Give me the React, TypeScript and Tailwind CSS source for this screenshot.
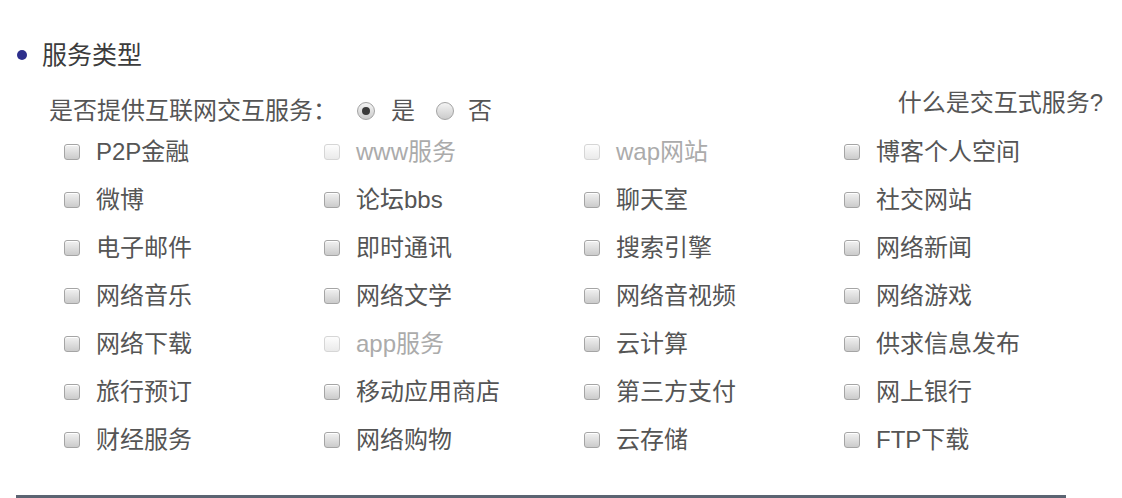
const font = { fontFamily: '"Liberation Sans", "Noto Sans CJK SC", sans-serif' };

type Item = { label: string; disabled?: boolean };

const items: Item[] = [
  { label: "P2P金融" },
  { label: "www服务", disabled: true },
  { label: "wap网站", disabled: true },
  { label: "博客个人空间" },
  { label: "微博" },
  { label: "论坛bbs" },
  { label: "聊天室" },
  { label: "社交网站" },
  { label: "电子邮件" },
  { label: "即时通讯" },
  { label: "搜索引擎" },
  { label: "网络新闻" },
  { label: "网络音乐" },
  { label: "网络文学" },
  { label: "网络音视频" },
  { label: "网络游戏" },
  { label: "网络下载" },
  { label: "app服务", disabled: true },
  { label: "云计算" },
  { label: "供求信息发布" },
  { label: "旅行预订" },
  { label: "移动应用商店" },
  { label: "第三方支付" },
  { label: "网上银行" },
  { label: "财经服务" },
  { label: "网络购物" },
  { label: "云存储" },
  { label: "FTP下载" },
];

function Checkbox({ disabled }: { disabled?: boolean }) {
  if (disabled) {
    return (
      <span className="block w-[16px] h-[16px] shrink-0 rounded-[3px] border border-[#d6d6d6] bg-gradient-to-b from-[#fdfdfd] to-[#eaeaea]" />
    );
  }
  return (
    <span className="block w-[16px] h-[16px] shrink-0 rounded-[3px] border border-[#a5a5a5] bg-gradient-to-b from-[#f2f2f2] to-[#cbcbcb] shadow-[inset_0_1px_0_#fff]" />
  );
}

function Radio({ checked }: { checked?: boolean }) {
  return (
    <span className="flex items-center justify-center w-[18px] h-[18px] shrink-0 rounded-full border border-[#a3a3a3] bg-gradient-to-b from-[#f4f4f4] to-[#cbcbcb]">
      {checked && <span className="block w-[8px] h-[8px] rounded-full bg-[#3a3a3a]" />}
    </span>
  );
}

export default function App() {
  return (
    <div className="w-[1122px] h-[498px] bg-white overflow-hidden" style={font}>
      {/* section title */}
      <div className="flex items-center pt-[37px] pl-[17px] h-[73px]">
        <span className="block w-[10px] h-[10px] rounded-full bg-[#2d2f8c]" />
        <span className="ml-[15px] text-[25px] leading-[36px] text-[#3c3c3c]">服务类型</span>
      </div>

      {/* question */}
      <div className="flex h-[32px] mt-[22px] pl-[49px] pr-[19px] text-[24px] leading-[32px] text-[#555]">
        <span>是否提供互联网交互服务：</span>
        <label className="flex items-center ml-[20px]">
          <Radio checked />
          <span className="ml-[16px]">是</span>
        </label>
        <label className="flex items-center ml-[21px]">
          <Radio />
          <span className="ml-[14px]">否</span>
        </label>
        <span className="ml-auto -mt-[8px]">什么是交互式服务?</span>
      </div>

      {/* options */}
      <div className="grid grid-cols-[260px_260px_260px_260px] mt-[1px] pl-[64px]">
        {items.map((it) => (
          <div key={it.label} className="flex items-center h-[48px]">
            <Checkbox disabled={it.disabled} />
            <span
              className={
                "ml-[16px] text-[24px] leading-[32px] " +
                (it.disabled ? "text-[#ababab]" : "text-[#555]")
              }
            >
              {it.label}
            </span>
          </div>
        ))}
      </div>

      <div className="mt-[31px] ml-[16px] w-[1050px] h-[3px] bg-[#5b6472]" />
    </div>
  );
}
